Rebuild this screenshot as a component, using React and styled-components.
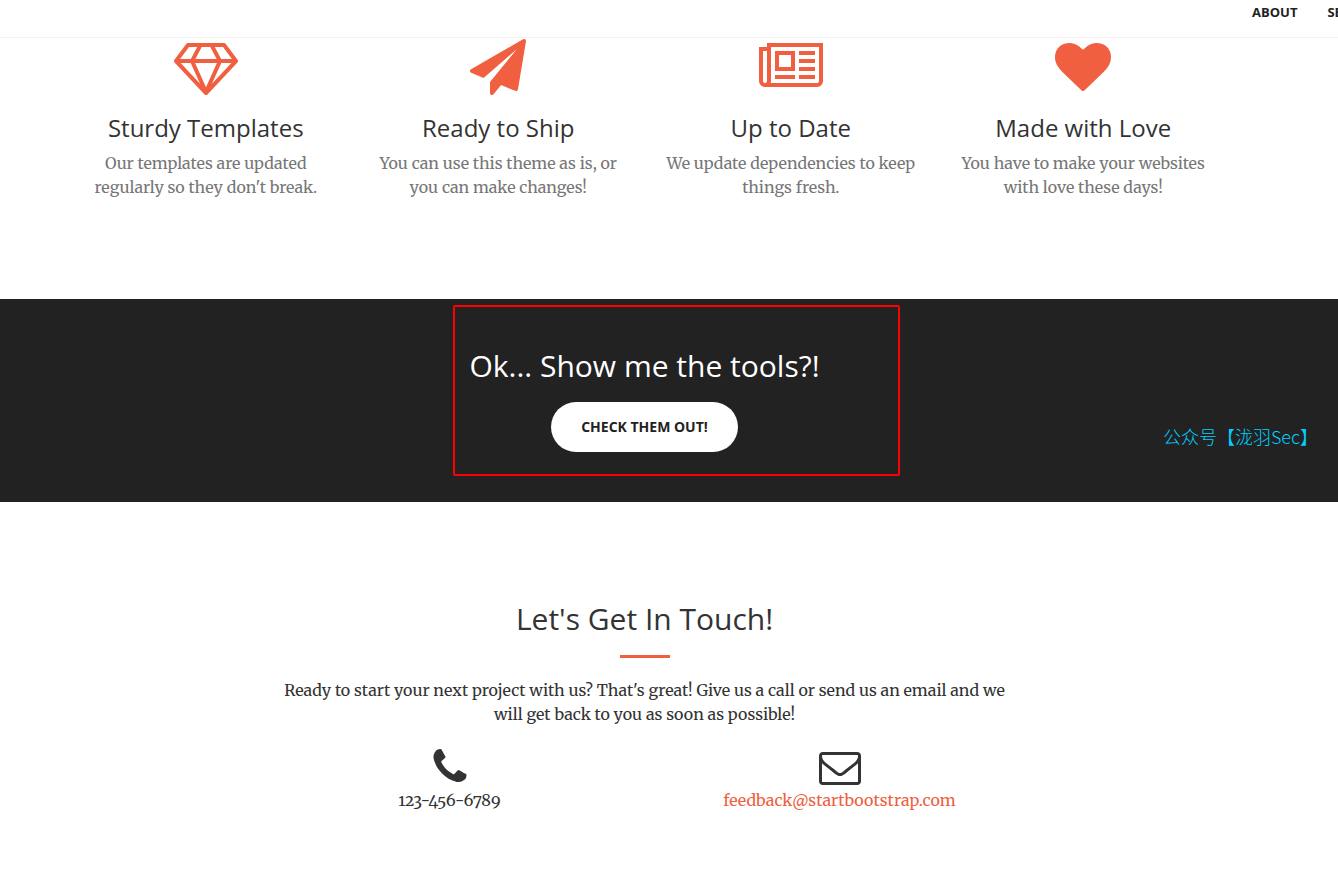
import styled, { createGlobalStyle } from "styled-components";

const GlobalStyle = createGlobalStyle`
  * {
    box-sizing: border-box;
  }

  body {
    margin: 0;
    overflow-x: hidden;
    background-color: white;
    color: #333333;
    font-family: Merriweather, "DejaVu Serif Condensed", "DejaVu Serif", serif;
    font-size: 16px;
    font-variant-numeric: oldstyle-nums;
    line-height: 24px;
  }
`;

const StyledNav = styled.nav`
  display: flex;
  justify-content: flex-end;
  height: 38px;
  border-bottom: 1px solid #f2f2f2;
  overflow: hidden;
`;

const StyledNavList = styled.ul`
  display: flex;
  flex: 0 0 86px;
  gap: 30px;
  min-width: 0;
  margin: 0;
  padding: 0;
  line-height: 22px;
  list-style: none;
`;

const StyledNavLink = styled.a`
  color: #222222;
  font-family: "Open Sans", sans-serif;
  font-size: 13px;
  font-weight: 700;
  text-transform: uppercase;
  text-decoration: none;
`;

const StyledSection = styled.section`
  position: relative;
  padding: ${({ $padding }) => $padding};
  background-color: ${({ $dark }) => ($dark ? "#222222" : "white")};
  color: ${({ $dark }) => ($dark ? "white" : "#333333")};
  text-align: center;
`;

const StyledFeatures = styled.div`
  display: grid;
  grid-template-columns: repeat(4, 1fr);
  max-width: 1170px;
  margin: 0 auto;
`;

const StyledFeature = styled.article`
  padding: 0 15px;
`;

const StyledIcon = styled.svg`
  display: block;
  height: ${({ $size }) => $size}px;
  margin: 0 auto;
  fill: ${({ $color }) => $color};
`;

const StyledFeatureTitle = styled.h3`
  margin: 20px 0 10px;
  font-family: "Open Sans", sans-serif;
  font-size: 24px;
  font-weight: 400;
  line-height: 26px;
`;

const StyledFeatureText = styled.p`
  margin: 0;
  color: #777777;
`;

const StyledTitle = styled.h2`
  margin: 0 0 20px;
  font-family: "Open Sans", sans-serif;
  font-size: 30px;
  font-weight: 400;
  line-height: 33px;
`;

const StyledButton = styled.button`
  display: block;
  margin: 0 auto;
  padding: 15px 30px;
  border: none;
  border-radius: 300px;
  background-color: white;
  color: #222222;
  font-family: "Open Sans", sans-serif;
  font-size: 14px;
  font-weight: 700;
  line-height: 20px;
  text-transform: uppercase;
`;

const StyledHighlight = styled.div`
  position: absolute;
  top: 6px;
  left: calc(50% - 216px);
  width: 447px;
  height: 171px;
  border: 2px solid red;
  border-radius: 2px;
  pointer-events: none;
`;

const StyledWatermark = styled.span`
  position: absolute;
  top: 125px;
  right: 20px;
  color: #00d0ff;
  font-family: "Noto Sans CJK SC", sans-serif;
  font-size: 18px;
  font-weight: 300;
`;

const StyledContact = styled.div`
  max-width: 780px;
  margin: 0 auto;
`;

const StyledDivider = styled.hr`
  width: 50px;
  height: 3px;
  margin: 20px auto;
  border: none;
  background-color: #f05f40;
`;

const StyledContactText = styled.p`
  margin: 0 0 20px;
  padding: 0 15px;
`;

const StyledContactWays = styled.div`
  display: grid;
  grid-template-columns: 1fr 1fr;
`;

const StyledContactWay = styled.p`
  margin: 0;
`;

const StyledMailLink = styled.a`
  color: #f05f40;
  text-decoration: none;
`;

const icons = {
  diamond: {
    width: 2048,
    path: "M212 768l623 665-300-665H212zm812 772l349-772H675l349 772zM538 640l204-384H480L192 640h346zm675 793l623-665h-323zM683 640h682l-204-384H887zm827 0h346l-288-384h-262zm141-486l384 512q14 18 13 41.5t-17 40.5l-960 1024q-18 20-47 20t-47-20L17 748Q1 731 0 707.5T13 666l384-512q18-26 51-26h1152q33 0 51 26z",
  },
  plane: {
    width: 1792,
    path: "M1764 11q33 24 27 64l-256 1536q-5 29-32 45-14 8-31 8-11 0-24-5l-453-185-242 295q-18 23-49 23-13 0-22-4-19-7-30.5-23.5t-11.5-36.5v-349l864-1059-1069 925-395-162q-37-14-40-55-2-40 32-59l1664-960q15-9 32-9 20 0 36 11z",
  },
  newspaper: {
    width: 2048,
    path: "M1024 512h-384v384h384v-384zm128 640v128h-640v-128h640zm0-768v640h-640v-640h640zm640 768v128h-512v-128h512zm0-256v128h-512v-128h512zm0-256v128h-512v-128h512zm0-256v128h-512v-128h512zm-1536 960v-960h-128v960q0 26 19 45t45 19 45-19 19-45zm1664 0v-1088h-1536v1088q0 33-11 64h1483q26 0 45-19t19-45zm128-1216v1216q0 80-56 136t-136 56h-1664q-80 0-136-56t-56-136v-1088h256v-128h1792z",
  },
  heart: {
    width: 1792,
    path: "M896 1664q-26 0-44-18l-624-602q-10-8-27.5-26t-55.5-65.5-68-97.5-53.5-121-23.5-138q0-220 127-344t351-124q62 0 126.5 21.5t120 58 95.5 68.5 76 68q36-36 76-68t95.5-68.5 120-58 126.5-21.5q224 0 351 124t127 344q0 221-229 450l-623 600q-18 18-44 18z",
  },
  phone: {
    width: 1792,
    path: "M1600 1240q0 27-10 70.5t-21 68.5q-21 50-122 106-94 51-186 51-27 0-53-3.5t-57.5-12.5-47-14.5-55.5-20.5-49-18q-98-35-175-83-127-79-264-216t-216-264q-48-77-83-175-3-9-18-49t-20.5-55.5-14.5-47-12.5-57.5-3.5-53q0-92 51-186 56-101 106-122 25-11 68.5-21t70.5-10q14 0 21 3 18 6 53 76 11 19 30 54t35 63.5 31 53.5q3 4 17.5 25t21.5 35.5 7 28.5q0 20-28.5 50t-62 55-62 53-28.5 46q0 9 5 22.5t8.5 20.5 14 24 11.5 19q76 137 174 235t235 174q2 1 19 11.5t24 14 20.5 8.5 22.5 5q18 0 46-28.5t53-62 55-62 50-28.5q14 0 28.5 7t35.5 21.5 25 17.5q25 15 53.5 31t63.5 35 54 30q70 35 76 53 3 7 3 21z",
  },
  envelope: {
    width: 1792,
    path: "M1664 1504v-768q-32 36-69 66-268 206-426 338-51 43-83 67t-86.5 48.5-102.5 24.5h-2q-48 0-102.5-24.5t-86.5-48.5-83-67q-158-132-426-338-37-30-69-66v768q0 13 9.5 22.5t22.5 9.5h1472q13 0 22.5-9.5t9.5-22.5zm0-1051v-24.5l-.5-13-3-12.5-5.5-9-9-7.5-14-2.5h-1472q-13 0-22.5 9.5t-9.5 22.5q0 168 147 284 193 152 401 317 6 5 35 29.5t46 37.5 44.5 31.5 50.5 27.5 43 9h2q20 0 43-9t50.5-27.5 44.5-31.5 46-37.5 35-29.5q208-165 401-317 54-43 100.5-115.5t46.5-131.5zm128-37v1088q0 66-47 113t-113 47h-1472q-66 0-113-47t-47-113v-1088q0-66 47-113t113-47h1472q66 0 113 47t47 113z",
  },
};

const features = [
  {
    icon: "diamond",
    title: "Sturdy Templates",
    text: "Our templates are updated regularly so they don't break.",
  },
  {
    icon: "plane",
    title: "Ready to Ship",
    text: "You can use this theme as is, or you can make changes!",
  },
  {
    icon: "newspaper",
    title: "Up to Date",
    text: "We update dependencies to keep things fresh.",
  },
  {
    icon: "heart",
    title: "Made with Love",
    text: "You have to make your websites with love these days!",
  },
];

function Icon({ name, size, color }) {
  const { width, path } = icons[name];

  return (
    <StyledIcon
      viewBox={`0 0 ${width} 1792`}
      $size={size}
      $color={color}
      aria-hidden="true"
    >
      <path d={path} />
    </StyledIcon>
  );
}

export default function App() {
  return (
    <>
      <GlobalStyle />
      <StyledNav>
        <StyledNavList>
          <li>
            <StyledNavLink href="#about">About</StyledNavLink>
          </li>
          <li>
            <StyledNavLink href="#services">Services</StyledNavLink>
          </li>
        </StyledNavList>
      </StyledNav>
      <main>
        <StyledSection id="services" $padding="1px 49px 100px 0">
          <StyledFeatures>
            {features.map(({ icon, title, text }) => (
              <StyledFeature key={title}>
                <Icon name={icon} size={56} color="#f05f40" />
                <StyledFeatureTitle>{title}</StyledFeatureTitle>
                <StyledFeatureText>{text}</StyledFeatureText>
              </StyledFeature>
            ))}
          </StyledFeatures>
        </StyledSection>
        <StyledSection $dark $padding="50px 49px 50px 0">
          <StyledTitle>Ok... Show me the tools?!</StyledTitle>
          <StyledButton type="button">Check them out!</StyledButton>
          <StyledHighlight />
          <StyledWatermark>公众号【泷羽Sec】</StyledWatermark>
        </StyledSection>
        <StyledSection id="contact" $padding="100px 49px 60px 0">
          <StyledContact>
            <StyledTitle>Let's Get In Touch!</StyledTitle>
            <StyledDivider />
            <StyledContactText>
              Ready to start your next project with us? That's great! Give us a
              call or send us an email and we will get back to you as soon as
              possible!
            </StyledContactText>
            <StyledContactWays>
              <div>
                <Icon name="phone" size={42} color="#333333" />
                <StyledContactWay>123-456-6789</StyledContactWay>
              </div>
              <div>
                <Icon name="envelope" size={42} color="#333333" />
                <StyledContactWay>
                  <StyledMailLink href="mailto:feedback@startbootstrap.com">
                    feedback@startbootstrap.com
                  </StyledMailLink>
                </StyledContactWay>
              </div>
            </StyledContactWays>
          </StyledContact>
        </StyledSection>
      </main>
    </>
  );
}
